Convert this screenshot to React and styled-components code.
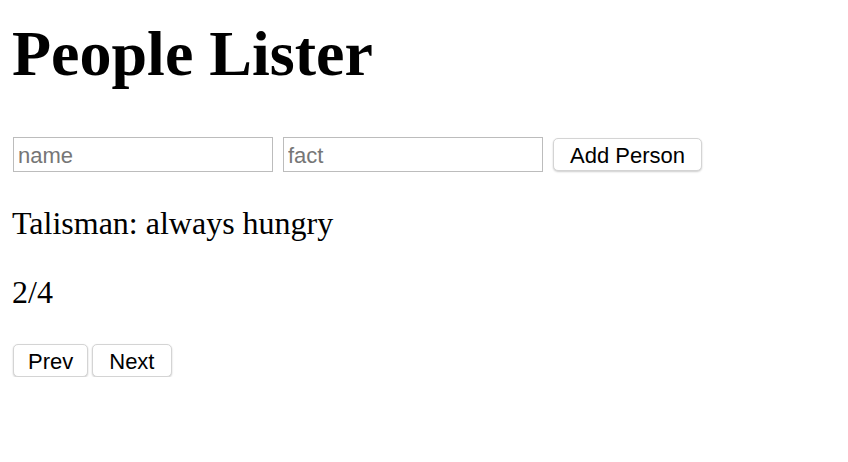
import React, { useState } from 'react'
import styled, { createGlobalStyle } from 'styled-components'

const GlobalStyle = createGlobalStyle`
	body {
		margin: 0;
		background: #fff;
		font-family: 'Liberation Serif', 'Times New Roman', serif;
		color: #000;
	}
`

const Page = styled.div`
	padding: 0 12px;
`

const Title = styled.h1`
	margin: 17px 0 0;
	font-size: 64px;
	line-height: 74px;
	font-weight: bold;
`

const Form = styled.form`
	display: flex;
	align-items: center;
	gap: 10px;
	margin-top: 46px;
	padding-left: 1px;
`

const Field = styled.input`
	box-sizing: border-box;
	width: 260px;
	height: 35px;
	margin: 0;
	padding: 2px 4px 0;
	border: 1px solid #bcbcbc;
	border-radius: 0;
	font-family: 'Liberation Sans', Arial, sans-serif;
	font-size: 22px;
	color: #000;
	outline: none;

	&::placeholder {
		color: #767676;
	}
`

const Button = styled.button`
	box-sizing: border-box;
	height: 33px;
	margin: 0;
	padding: 2px ${({ $pad }) => $pad || 16}px 0;
	background: #fff;
	border: 1px solid #d4d4d4;
	border-radius: 5px;
	box-shadow: 0 1px 2px rgba(0, 0, 0, 0.2);
	font-family: 'Liberation Sans', Arial, sans-serif;
	font-size: 22px;
	color: #000;
	cursor: pointer;
`

const Line = styled.p`
	margin: 32px 0 0;
	font-size: 32px;
	line-height: 37px;

	&:first-of-type {
		margin-top: 33px;
	}
`

const Pager = styled.div`
	display: flex;
	gap: 4px;
	margin-top: 33px;
	padding-left: 1px;
`

const people = [
	{ name: 'Simba', fact: 'likes naps' },
	{ name: 'Talisman', fact: 'always hungry' },
	{ name: 'Mochi', fact: 'chases lasers' },
	{ name: 'Biscuit', fact: 'hates baths' },
]

export default function App() {
	const [index, setIndex] = useState(1)
	const person = people[index]

	return (
		<Page>
			<GlobalStyle />
			<Title>People Lister</Title>
			<Form onSubmit={(e) => e.preventDefault()}>
				<Field type='text' placeholder='name' />
				<Field type='text' placeholder='fact' />
				<Button type='submit'>Add Person</Button>
			</Form>
			<Line>
				{person.name}: {person.fact}
			</Line>
			<Line>
				{index + 1}/{people.length}
			</Line>
			<Pager>
				<Button $pad={14} onClick={() => setIndex(Math.max(0, index - 1))}>
					Prev
				</Button>
				<Button $pad={16} onClick={() => setIndex(Math.min(people.length - 1, index + 1))}>
					Next
				</Button>
			</Pager>
		</Page>
	)
}
